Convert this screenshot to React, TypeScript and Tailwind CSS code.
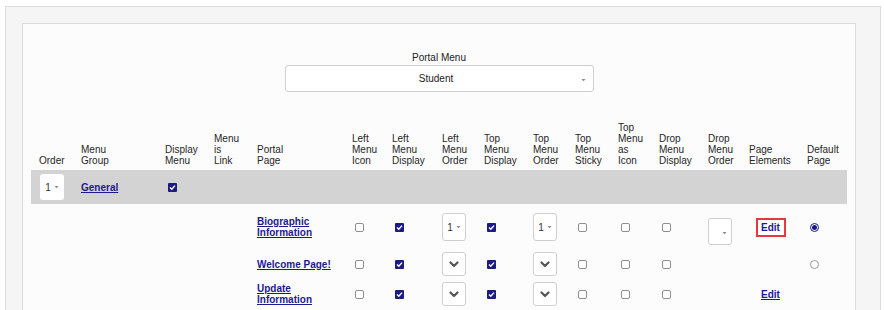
import React from "react";

const LINK = "#1d1a8e";

function Check({ on }: { on?: boolean }) {
  return on ? (
    <span className="ml-[3px] inline-flex h-[9px] w-[9px] items-center justify-center rounded-[1px] bg-[#1c1a87]">
      <svg width="7" height="7" viewBox="0 0 7 7">
        <path d="M1 3.6 L2.8 5.3 L6 1.6" stroke="#fff" strokeWidth="1.4" fill="none" />
      </svg>
    </span>
  ) : (
    <span className="ml-[3px] inline-block h-[9px] w-[9px] rounded-[2px] border border-[#8f8f8f] bg-white" />
  );
}

function Radio({ on }: { on?: boolean }) {
  return on ? (
    <span className="ml-[3px] inline-flex h-[9px] w-[9px] items-center justify-center rounded-full border border-[#1c1a87] bg-white">
      <span className="h-[5px] w-[5px] rounded-full bg-[#1c1a87]" />
    </span>
  ) : (
    <span className="ml-[3px] inline-block h-[9px] w-[9px] rounded-full border border-[#9a9a9a] bg-white" />
  );
}

function Tri() {
  return (
    <svg width="5" height="4" viewBox="0 0 5 4">
      <path d="M0.5 1 L4.5 1 L2.5 3.3 Z" fill="#8a8a8a" />
    </svg>
  );
}

function SmallSel({ value, h, border = true, extra = "" }: { value?: string; h: string; border?: boolean; extra?: string }) {
  return (
    <div
      className={`flex w-[24px] items-center justify-center gap-[3px] rounded-[3px] bg-white ${h} ${extra} ${
        border ? "border border-[#cfcfcf]" : ""
      }`}
    >
      {value ? <span className="text-[10px] text-[#333]">{value}</span> : null}
      <span className={value ? "" : "ml-[9px] mt-[3px]"}>
        <Tri />
      </span>
    </div>
  );
}

function ChevSel() {
  return (
    <div className="flex h-[24px] w-[24px] items-center justify-center rounded-[3px] border border-[#cfcfcf] bg-white">
      <svg width="10" height="7" viewBox="0 0 10 7">
        <path d="M1.5 1.5 L5 5 L8.5 1.5" stroke="#555" strokeWidth="2.2" fill="none" strokeLinecap="round" strokeLinejoin="round" />
      </svg>
    </div>
  );
}

const GRID =
  "grid grid-cols-[42px_84px_49px_43px_95px_40px_50px_42px_49px_42px_43px_41px_49px_41px_58px_48px]";

const headers: string[][] = [
  ["Order"],
  ["Menu", "Group"],
  ["Display", "Menu"],
  ["Menu", "is", "Link"],
  ["Portal", "Page"],
  ["Left", "Menu", "Icon"],
  ["Left", "Menu", "Display"],
  ["Left", "Menu", "Order"],
  ["Top", "Menu", "Display"],
  ["Top", "Menu", "Order"],
  ["Top", "Menu", "Sticky"],
  ["Top", "Menu", "as", "Icon"],
  ["Drop", "Menu", "Display"],
  ["Drop", "Menu", "Order"],
  ["Page", "Elements"],
  ["Default", "Page"],
];

function Cell({ children, className = "" }: { children?: React.ReactNode; className?: string }) {
  return <div className={`flex items-center pl-[8px] ${className}`}>{children}</div>;
}

function PageLink({ lines }: { lines: string[] }) {
  return (
    <a className="block text-[10px] font-bold leading-[11px] underline" style={{ color: LINK }} href="#">
      {lines.map((l, i) => (
        <span key={i} className="block">
          {l}
        </span>
      ))}
    </a>
  );
}

type RowProps = {
  h: string;
  page: string[];
  first?: boolean;
  edit?: "box" | "link" | null;
  radio?: boolean | null;
};

function PageRow({ h, page, first, edit, radio }: RowProps) {
  return (
    <div className={`${GRID} ${h}`}>
      <Cell />
      <Cell />
      <Cell />
      <Cell />
      <Cell>
        <PageLink lines={page} />
      </Cell>
      <Cell>
        <Check />
      </Cell>
      <Cell>
        <Check on />
      </Cell>
      <Cell>{first ? <SmallSel value="1" h="h-[28px]" /> : <ChevSel />}</Cell>
      <Cell>
        <Check on />
      </Cell>
      <Cell>{first ? <SmallSel value="1" h="h-[28px]" /> : <ChevSel />}</Cell>
      <Cell>
        <Check />
      </Cell>
      <Cell>
        <Check />
      </Cell>
      <Cell>
        <Check />
      </Cell>
      <Cell>{first ? <SmallSel h="h-[27px]" extra="mt-[9px]" /> : null}</Cell>
      <Cell className="justify-center pl-0 pr-[7px]">
        {edit === "box" ? (
          <span className="flex h-[19px] w-[30px] items-center justify-center border-2 border-[#e8383d] bg-white text-[10px] font-bold" style={{ color: LINK }}>
            Edit
          </span>
        ) : edit === "link" ? (
          <a href="#" className="text-[10px] font-bold underline" style={{ color: LINK }}>
            Edit
          </a>
        ) : null}
      </Cell>
      <Cell>{radio === null || radio === undefined ? null : <Radio on={radio} />}</Cell>
    </div>
  );
}

export default function App() {
  return (
    <div
      className="h-[310px] w-[884px] overflow-hidden bg-white pl-[5px] pt-[6px]"
      style={{ fontFamily: '"Liberation Sans", Arial, sans-serif' }}
    >
      <div className="h-[330px] w-[876px] border border-[#dcdcdc] bg-[#f5f5f5] pl-[16px] pr-[23px] pt-[16px]">
        <div className="h-[320px] w-[834px] border border-[#dcdcdc] bg-[#fcfcfc] px-[8px] pt-[28px]">
          <div className="flex flex-col items-center">
            <div className="text-[10px] leading-[12px] text-[#222]">Portal Menu</div>
            <div className="relative mt-[1px] flex h-[27px] w-[309px] items-center justify-center rounded-[3px] border border-[#cfcfcf] bg-white">
              <span className="pr-[6px] text-[10px] text-[#222]">Student</span>
              <span className="absolute right-[7px] top-[12px]">
                <Tri />
              </span>
            </div>
          </div>

          <div className="w-[816px]">
            <div className={`${GRID} h-[78px] items-end pb-[4px]`}>
              {headers.map((lines, i) => (
                <div key={i} className="pl-[8px] text-[10px] leading-[11px] text-[#262626]">
                  {lines.map((l, j) => (
                    <div key={j}>{l}</div>
                  ))}
                </div>
              ))}
            </div>

            <div className={`${GRID} h-[34px] bg-[#d3d3d3]`}>
              <Cell className="pl-[9px]">
                <SmallSel value="1" h="h-[26px]" border={false} />
              </Cell>
              <Cell>
                <a href="#" className="text-[10px] font-bold underline" style={{ color: LINK }}>
                  General
                </a>
              </Cell>
              <Cell>
                <Check on />
              </Cell>
            </div>

            <PageRow h="h-[46px]" page={["Biographic", "Information"]} first edit="box" radio={true} />
            <PageRow h="h-[28px]" page={["Welcome Page!"]} edit={null} radio={false} />
            <PageRow h="h-[32px]" page={["Update", "Information"]} edit="link" radio={null} />
          </div>
        </div>
      </div>
    </div>
  );
}
